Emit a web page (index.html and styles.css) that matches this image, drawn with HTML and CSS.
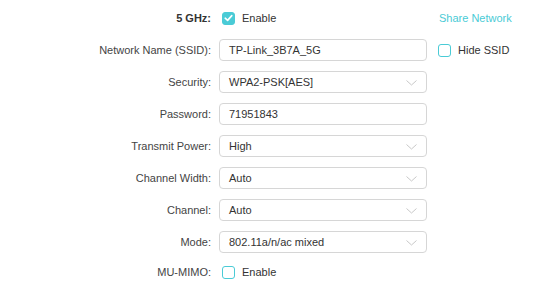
FILE: index.html
```html
<!DOCTYPE html>
<html lang="en">
<head>
  <meta charset="UTF-8" />
  <title>Wireless 5 GHz</title>
  <link rel="stylesheet" href="styles.css">
</head>
<body>
  <div class="panel">
    <div class="row check-row">
      <label class="field-label strong">5 GHz:</label>
      <div class="field">
        <span class="checkbox checked">
          <svg width="9" height="8" viewBox="0 0 9 8"><path d="M1.2 4.2 L3.6 6.4 L7.8 1.6" fill="none" stroke="#fff" stroke-width="1.6" stroke-linecap="round" stroke-linejoin="round"/></svg>
        </span>
        <span class="check-text">Enable</span>
      </div>
      <a class="share-link" href="#">Share Network</a>
    </div>

    <div class="row">
      <label class="field-label">Network Name (SSID):</label>
      <div class="field"><div class="box">TP-Link_3B7A_5G</div></div>
      <div class="extra">
        <span class="checkbox"></span>
        <span class="check-text">Hide SSID</span>
      </div>
    </div>

    <div class="row">
      <label class="field-label">Security:</label>
      <div class="field"><div class="box select">WPA2-PSK[AES]<svg class="chevron" width="11" height="6" viewBox="0 0 11 6"><path d="M0.5 0.5 L5.5 5 L10.5 0.5" fill="none" stroke="#c8c8c8" stroke-width="1"/></svg></div></div>
    </div>

    <div class="row">
      <label class="field-label">Password:</label>
      <div class="field"><div class="box">71951843</div></div>
    </div>

    <div class="row">
      <label class="field-label">Transmit Power:</label>
      <div class="field"><div class="box select">High<svg class="chevron" width="11" height="6" viewBox="0 0 11 6"><path d="M0.5 0.5 L5.5 5 L10.5 0.5" fill="none" stroke="#c8c8c8" stroke-width="1"/></svg></div></div>
    </div>

    <div class="row">
      <label class="field-label">Channel Width:</label>
      <div class="field"><div class="box select">Auto<svg class="chevron" width="11" height="6" viewBox="0 0 11 6"><path d="M0.5 0.5 L5.5 5 L10.5 0.5" fill="none" stroke="#c8c8c8" stroke-width="1"/></svg></div></div>
    </div>

    <div class="row">
      <label class="field-label">Channel:</label>
      <div class="field"><div class="box select">Auto<svg class="chevron" width="11" height="6" viewBox="0 0 11 6"><path d="M0.5 0.5 L5.5 5 L10.5 0.5" fill="none" stroke="#c8c8c8" stroke-width="1"/></svg></div></div>
    </div>

    <div class="row">
      <label class="field-label">Mode:</label>
      <div class="field"><div class="box select">802.11a/n/ac mixed<svg class="chevron" width="11" height="6" viewBox="0 0 11 6"><path d="M0.5 0.5 L5.5 5 L10.5 0.5" fill="none" stroke="#c8c8c8" stroke-width="1"/></svg></div></div>
    </div>

    <div class="row check-row last">
      <label class="field-label">MU-MIMO:</label>
      <div class="field">
        <span class="checkbox"></span>
        <span class="check-text">Enable</span>
      </div>
    </div>
  </div>
</body>
</html>
```

FILE: styles.css
```css
body {
  margin: 0;
  background: #fff;
  font-family: "Liberation Sans", Arial, sans-serif;
  font-size: 11px;
  color: #333;
}
.panel {
  padding-top: 7px;
}
.row {
  display: flex;
  align-items: center;
  height: 22px;
  margin-bottom: 10px;
}
.row.last {
  margin-top: -2px;
  margin-bottom: 0;
}
.field-label {
  width: 211px;
  text-align: right;
  color: #444;
}
.field-label.strong {
  font-weight: bold;
  color: #333;
}
.field {
  display: flex;
  align-items: center;
  width: 208px;
  margin-left: 8px;
}
.box {
  box-sizing: border-box;
  width: 208px;
  height: 22px;
  border: 1px solid #d6d6d6;
  border-radius: 4px;
  padding: 0 9px;
  line-height: 20px;
  color: #333;
  position: relative;
}
.chevron {
  position: absolute;
  right: 9px;
  top: 8px;
}
.checkbox {
  box-sizing: border-box;
  width: 13px;
  height: 13px;
  border: 1px solid #4acbd6;
  border-radius: 3px;
  display: inline-flex;
  align-items: center;
  justify-content: center;
  margin-left: 3px;
}
.checkbox.checked {
  background: #4acbd6;
}
.check-text {
  margin-left: 7px;
  color: #333;
}
.extra {
  display: flex;
  align-items: center;
  margin-left: 8px;
}
.share-link {
  margin-left: 12px;
  color: #4acbd6;
  text-decoration: none;
}
```
